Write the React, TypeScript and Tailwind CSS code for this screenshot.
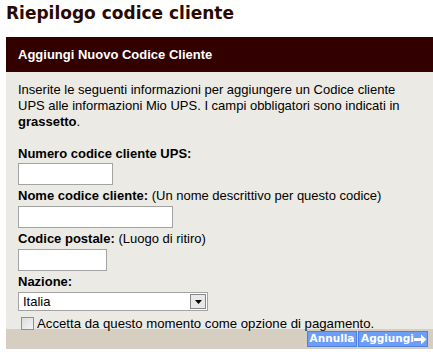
export default function App() {
  return (
    <div className="w-[433px] h-[354px] bg-white overflow-hidden font-['Liberation_Sans',Arial,sans-serif] text-black">
      {/* Title */}
      <h1 className="pl-[6px] pt-[3px] h-[37px] text-[17px] leading-[20px] font-bold text-[#2a0a00] font-['DejaVu_Sans',Verdana,sans-serif]">
        Riepilogo codice cliente
      </h1>

      <div className="ml-[6px]">
        {/* Header bar */}
        <div className="h-[35px] bg-[#330000] flex items-center pl-[12px]">
          <span className="text-white font-bold text-[13px]">Aggiungi Nuovo Codice Cliente</span>
        </div>

        {/* Content */}
        <div className="bg-[#ebeae4] pl-[12px] pr-[8px] pt-[10px] h-[257px]">
          <p className="w-[386px] text-[13px] leading-[16px]">
            Inserite le seguenti informazioni per aggiungere un Codice cliente UPS alle informazioni Mio UPS. I campi obbligatori sono indicati in <b>grassetto</b>.
          </p>

          <div className="mt-[15px] text-[13px] leading-[17px] font-bold">Numero codice cliente UPS:</div>
          <div className="mt-[1px] w-[95px] h-[22px] bg-white border border-[#a3a3a3]" />

          <div className="mt-[2px] text-[13px] leading-[17px]">
            <b>Nome codice cliente:</b> (Un nome descrittivo per questo codice)
          </div>
          <div className="mt-[2px] w-[155px] h-[22px] bg-white border border-[#a3a3a3]" />

          <div className="mt-[2px] text-[13px] leading-[17px]">
            <b>Codice postale:</b> (Luogo di ritiro)
          </div>
          <div className="mt-[2px] w-[89px] h-[22px] bg-white border border-[#a3a3a3]" />

          <div className="mt-[2px] text-[13px] leading-[17px] font-bold">Nazione:</div>
          <div className="mt-[2px] w-[190px] h-[19px] bg-white border border-[#a3a3a3] flex items-center">
            <span className="flex-1 pl-[4px] text-[13px] leading-[17px]">Italia</span>
            <div className="w-[16px] h-[15px] mr-[1px] bg-[#e8e8e8] border border-[#888] flex items-center justify-center">
              <svg width="7" height="4" viewBox="0 0 7 4">
                <path d="M0 0h7L3.5 4z" fill="#000" />
              </svg>
            </div>
          </div>

          <div className="mt-[4px] flex items-center gap-[3px]">
            <div className="ml-[3px] w-[13px] h-[13px] border border-[#8f8f8f] bg-gradient-to-br from-[#dcdcdc] to-[#f4f4f4]" />
            <span className="text-[13.2px] leading-[17px]">Accetta da questo momento come opzione di pagamento.</span>
          </div>
        </div>

        {/* Footer */}
        <div className="h-[20px] bg-[#d5cec1] flex justify-end items-center gap-[1px] pr-[5px]">
          <div className="h-[16px] w-[50px] bg-[#6d9df7] border border-[#4f7fe0] flex items-center justify-center text-white font-bold text-[10.5px] font-['DejaVu_Sans',Verdana,sans-serif]">
            Annulla
          </div>
          <div className="h-[16px] w-[70px] pl-[2px] bg-[#6d9df7] border border-[#4f7fe0] flex items-center text-white font-bold text-[10.5px] font-['DejaVu_Sans',Verdana,sans-serif]">
            Aggiungi
            <svg width="13" height="11" viewBox="0 0 13 11">
              <path d="M0 4h7V0.5L12.5 5.5 7 10.5V7H0z" fill="#fff" />
            </svg>
          </div>
        </div>
      </div>
    </div>
  )
}
